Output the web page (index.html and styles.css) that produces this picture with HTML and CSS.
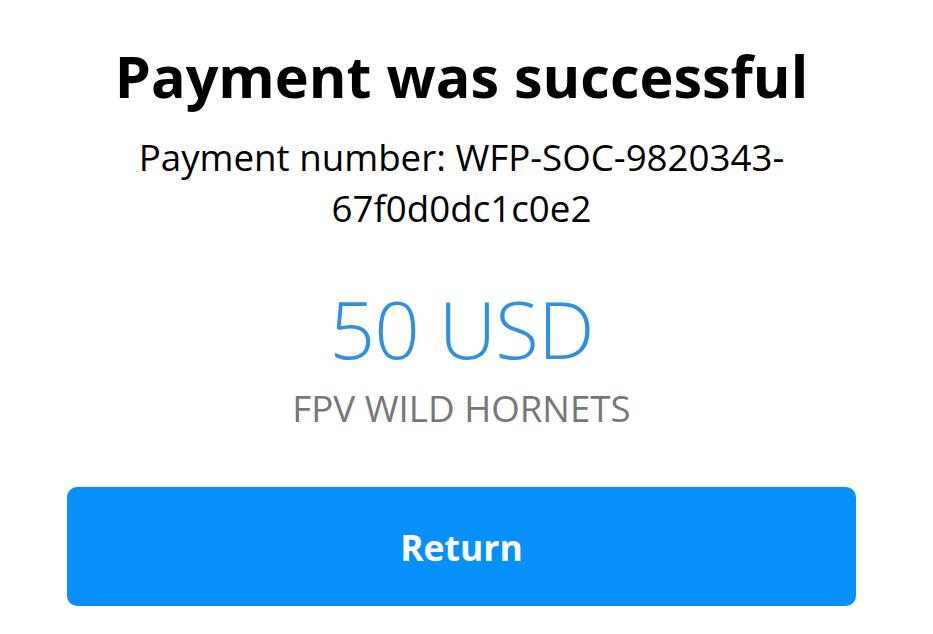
FILE: index.html
```html
<!DOCTYPE html>
<html lang="en">
<head>
<meta charset="utf-8">
<title>Payment was successful</title>
<link rel="stylesheet" href="styles.css">
</head>
<body>
<main class="page">
  <h1 class="title">Payment was successful</h1>
  <p class="number">Payment number: WFP-SOC-9820343-<wbr>67f0d0dc1c0e2</p>
  <div class="amount">50 USD</div>
  <div class="merchant">FPV WILD HORNETS</div>
  <button class="btn" type="button">Return</button>
</main>
</body>
</html>
```
FILE: styles.css
```css
html, body {
  margin: 0;
  padding: 0;
  background: #ffffff;
}
body {
  font-family: "Open Sans", "Noto Sans", sans-serif;
  color: #000;
}
.page {
  width: 789px;
  margin-left: 67px;
  display: flex;
  flex-direction: column;
  align-items: center;
  text-align: center;
}
.title {
  margin: 38px 0 0;
  font-size: 57.5px;
  font-weight: 700;
  line-height: 76px;
}
.number {
  margin: 17.5px 0 0;
  width: 700px;
  font-size: 36.7px;
  line-height: 51px;
  font-weight: 400;
}
.amount {
  margin-top: 39.5px;
  font-size: 80px;
  font-weight: 300;
  letter-spacing: -1px;
  line-height: 110px;
  color: #2e90de;
}
.merchant {
  margin-top: 0;
  font-size: 36.7px;
  line-height: 50px;
  color: #777777;
}
.btn {
  margin-top: 54px;
  width: 789px;
  height: 119px;
  border: none;
  border-radius: 10px;
  background: #0790f9;
  color: #ffffff;
  font-family: "Open Sans", "Noto Sans", sans-serif;
  font-size: 35.5px;
  font-weight: 700;
}
```
